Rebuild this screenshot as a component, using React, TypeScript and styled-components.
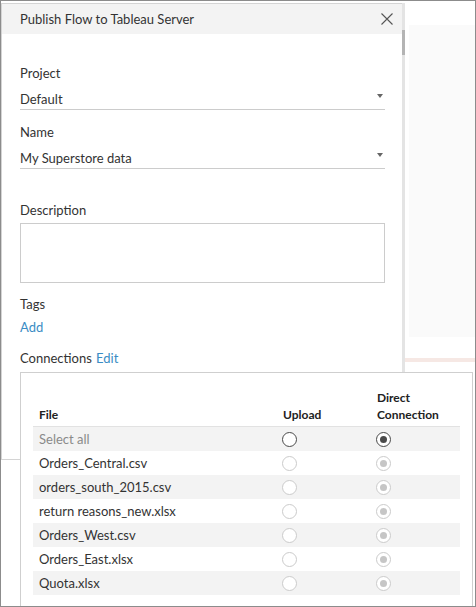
import styled, { createGlobalStyle } from "styled-components";

const GlobalStyle = createGlobalStyle`
  html, body {
    margin: 0;
    padding: 0;
    background: #ffffff;
  }
  body {
    font-family: Lato, "Noto Sans", sans-serif;
    color: #333333;
  }
  * {
    box-sizing: border-box;
  }
`;

type Connection = {
  file: string;
};

const connections: Connection[] = [
  { file: "Orders_Central.csv" },
  { file: "orders_south_2015.csv" },
  { file: "return reasons_new.xlsx" },
  { file: "Orders_West.csv" },
  { file: "Orders_East.xlsx" },
  { file: "Quota.xlsx" },
];

const App = () => {
  return (
    <>
      <GlobalStyle />
      <Frame>
        <Backdrop>
          <SidePanel />
          <AccentRule />
        </Backdrop>

        <Dialog>
          <Header>
            <Title>Publish Flow to Tableau Server</Title>
            <CloseButton aria-label="Close">
              <svg width="12" height="12" viewBox="0 0 12 12">
                <path
                  d="M0.5 0.5 L11.5 11.5 M11.5 0.5 L0.5 11.5"
                  stroke="#555"
                  strokeWidth="1.1"
                  fill="none"
                />
              </svg>
            </CloseButton>
          </Header>

          <Body>
            <Label>Project</Label>
            <Select>
              <span>Default</span>
              <Caret />
            </Select>

            <Label $space={12}>Name</Label>
            <Select>
              <span>My Superstore data</span>
              <Caret />
            </Select>

            <Label $space={31}>Description</Label>
            <TextArea />

            <Label $space={11}>Tags</Label>
            <LinkText $block>Add</LinkText>

            <Label $space={11}>
              Connections <LinkText>Edit</LinkText>
            </Label>
          </Body>

          <ScrollTrack>
            <ScrollThumb />
          </ScrollTrack>
        </Dialog>

        <Popover>
          <Grid>
            <HeadCell>File</HeadCell>
            <HeadCell>Upload</HeadCell>
            <HeadCell>
              Direct
              <br />
              Connection
            </HeadCell>
          </Grid>
          <Grid $row $shaded>
            <FileCell $muted>Select all</FileCell>
            <RadioCell>
              <Radio />
            </RadioCell>
            <RadioCell>
              <Radio $checked />
            </RadioCell>
          </Grid>
          {connections.map((c, i) => (
            <Grid key={c.file} $row $shaded={i % 2 === 1}>
              <FileCell>{c.file}</FileCell>
              <RadioCell>
                <Radio $disabled />
              </RadioCell>
              <RadioCell>
                <Radio $disabled $checked />
              </RadioCell>
            </Grid>
          ))}
        </Popover>
      </Frame>
    </>
  );
};

export default App;

const Frame = styled.div`
  position: relative;
  width: 476px;
  height: 607px;
  border: 1px solid #8c8c8c;
  overflow: hidden;
  background: #ffffff;
`;

/* the page sitting behind the dialog */
const Backdrop = styled.div`
  height: 100%;
  display: flex;
  flex-direction: column;
  padding: 24px 0 0 408px;
`;

const SidePanel = styled.div`
  height: 312px;
  background: #fafafa;
`;

const AccentRule = styled.div`
  margin: 21px 0 0 -6px;
  height: 4px;
  background: #f6e8e4;
`;

const Dialog = styled.div`
  position: absolute;
  left: 0;
  top: 2px;
  width: 402px;
  height: 457px;
  background: #ffffff;
  border: 1px solid #d4d4d4;
  display: flex;
  flex-direction: column;
`;

const Header = styled.div`
  height: 30px;
  flex: none;
  background: #f3f3f3;
  display: flex;
  align-items: center;
  justify-content: space-between;
  padding: 0 9px 0 18px;
`;

const Title = styled.div`
  font-size: 13px;
  color: #333333;
`;

const CloseButton = styled.button`
  border: 0;
  padding: 0;
  background: transparent;
  display: flex;
  width: 12px;
  height: 12px;
  cursor: pointer;
`;

const Body = styled.div`
  padding: 29px 17px 0 18px;
  display: flex;
  flex-direction: column;
`;

const Label = styled.div<{ $space?: number }>`
  margin-top: ${(p) => p.$space ?? 0}px;
  font-size: 13px;
  line-height: 20px;
  color: #333333;
`;

const Select = styled.div`
  margin-top: 2px;
  height: 25px;
  display: flex;
  align-items: flex-end;
  justify-content: space-between;
  border-bottom: 1px solid #cccccc;
  font-size: 13px;
  line-height: 20px;
  color: #333333;
  padding-right: 2px;
`;

const Caret = styled.span`
  align-self: center;
  margin-top: -2px;
  width: 0;
  height: 0;
  border-left: 3.5px solid transparent;
  border-right: 3.5px solid transparent;
  border-top: 4px solid #666666;
`;

const TextArea = styled.div`
  margin-top: 3px;
  height: 60px;
  border: 1px solid #cccccc;
`;

const LinkText = styled.span<{ $block?: boolean }>`
  display: ${(p) => (p.$block ? "block" : "inline")};
  margin-top: ${(p) => (p.$block ? "3px" : "0")};
  margin-left: ${(p) => (p.$block ? "0" : "1px")};
  font-size: 13px;
  line-height: 20px;
  color: #3a8cc4;
  cursor: pointer;
`;

const ScrollTrack = styled.div`
  position: absolute;
  top: -1px;
  right: -3px;
  width: 3px;
  height: calc(100% + 2px);
  background: #e4e4e4;
`;

const ScrollThumb = styled.div`
  margin-top: 27px;
  height: 25px;
  background: #b4b4b4;
`;

/* connection list dropped down from "Connections" */
const Popover = styled.div`
  position: absolute;
  left: 19px;
  top: 371px;
  width: 453px;
  height: 240px;
  background: #ffffff;
  border: 1px solid #cfcfcf;
  padding: 16px 12px 0 12px;
`;

const Grid = styled.div<{ $row?: boolean; $shaded?: boolean }>`
  display: grid;
  grid-template-columns: 244px 94px 88px;
  height: ${(p) => (p.$row ? "24px" : "auto")};
  align-items: ${(p) => (p.$row ? "center" : "end")};
  background: ${(p) => (p.$shaded ? "#f3f3f3" : "transparent")};
  border-bottom: ${(p) => (p.$row ? "0" : "1px solid #e2e2e2")};
  padding-bottom: ${(p) => (p.$row ? "0" : "3px")};
`;

const HeadCell = styled.div`
  padding-left: 6px;
  font-size: 12px;
  font-weight: 700;
  line-height: 17px;
  color: #222222;
`;

const FileCell = styled.div<{ $muted?: boolean }>`
  padding-left: 6px;
  font-size: 13px;
  line-height: 24px;
  color: ${(p) => (p.$muted ? "#8a8a8a" : "#333333")};
  white-space: nowrap;
`;

const RadioCell = styled.div`
  padding-left: 5px;
  display: flex;
  align-items: center;
`;

const Radio = styled.span<{ $checked?: boolean; $disabled?: boolean }>`
  width: 15px;
  height: 15px;
  border-radius: 50%;
  background: #ffffff;
  border: 1px solid ${(p) => (p.$disabled ? "#cbcbcb" : "#4a4a4a")};
  display: flex;
  align-items: center;
  justify-content: center;

  &::after {
    content: "";
    display: ${(p) => (p.$checked ? "block" : "none")};
    width: 7px;
    height: 7px;
    border-radius: 50%;
    background: ${(p) => (p.$disabled ? "#c6c6c6" : "#4a4a4a")};
  }
`;
